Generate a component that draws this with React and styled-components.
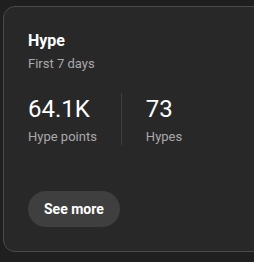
import React from "react";
import styled, { createGlobalStyle } from "styled-components";

const GlobalStyle = createGlobalStyle`
    html, body {
        margin: 0;
        padding: 0;
        background-color: #1f1f1f;
        overflow: hidden;
    }
    body {
        font-family: Roboto, "Noto Sans", sans-serif;
        color: #ffffff;
    }
`;

// the card is cut off by the right edge of the frame
const Page = styled.div`
    padding: 6px 0 0 3px;
    width: 254px;
    height: 262px;
    box-sizing: border-box;
    overflow: hidden;
`;

const Card = styled.div`
    width: 300px;
    height: 246px;
    box-sizing: border-box;
    padding: 23px 24px 24px 24px;
    border: solid 1px #4a4a4a;
    border-radius: 12px;
    background-color: #282828;
    display: flex;
    flex-direction: column;
`;

const Title = styled.div`
    font-size: 16px;
    font-weight: 700;
    line-height: 22px;
`;

const Subtitle = styled.div`
    margin-top: 3px;
    font-size: 13px;
    line-height: 18px;
    color: #aaaaaa;
`;

const Stats = styled.div`
    margin-top: 20px;
    display: flex;
`;

const Stat = styled.div`
    display: flex;
    flex-direction: column;
    padding: ${(props) => (props.first ? "0 24px 0 0" : "0 24px")};
    border-left: ${(props) => (props.first ? "none" : "solid 1px #3e3e3e")};
`;

const Value = styled.div`
    font-size: 24px;
    line-height: 32px;
    font-weight: 400;
`;

const Label = styled.div`
    margin-top: 4px;
    font-size: 13px;
    line-height: 16px;
    color: #aaaaaa;
`;

const Footer = styled.div`
    margin-top: auto;
    display: flex;
`;

const Button = styled.button`
    height: 36px;
    padding: 0 16px;
    border: none;
    border-radius: 18px;
    background-color: #3f3f3f;
    color: #ffffff;
    font-family: Roboto, "Noto Sans", sans-serif;
    font-size: 14px;
    font-weight: 700;
    cursor: pointer;
`;

const stats = [
    { value: "64.1K", label: "Hype points" },
    { value: "73", label: "Hypes" },
];

const App = () => {
    return (
        <Page>
            <GlobalStyle />
            <Card>
                <Title>Hype</Title>
                <Subtitle>First 7 days</Subtitle>
                <Stats>
                    {stats.map((s, i) => (
                        <Stat key={s.label} first={i === 0}>
                            <Value>{s.value}</Value>
                            <Label>{s.label}</Label>
                        </Stat>
                    ))}
                </Stats>
                <Footer>
                    <Button>See more</Button>
                </Footer>
            </Card>
        </Page>
    );
};

export default App;
